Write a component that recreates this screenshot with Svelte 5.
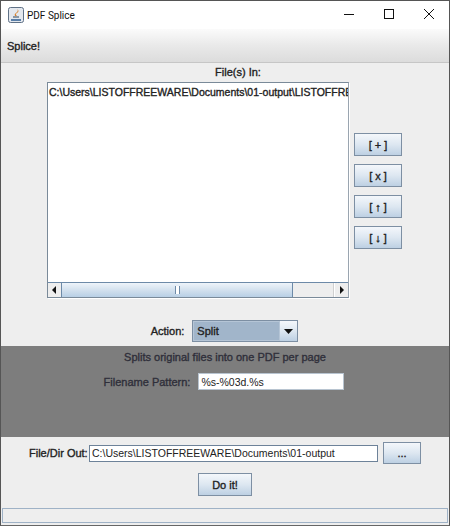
<script>
  let pattern = $state('%s-%03d.%s');
  let out = $state('C:\\Users\\LISTOFFREEWARE\\Documents\\01-output');
  const files = ['C:\\Users\\LISTOFFREEWARE\\Documents\\01-output\\LISTOFFREEWARE.pdf'];
  const listButtons = ['[ + ]', '[ x ]', '[ ↑ ]', '[ ↓ ]'];
</script>

<div class="window">
  <header class="titlebar">
    <svg class="app-icon" width="16" height="16" viewBox="0 0 16 16">
      <rect x="0.5" y="0.5" width="15" height="15" rx="2" fill="#e4e8ee" stroke="#5f7186" />
      <path d="M3 12h10v2H3z" fill="#5a7fa8" />
      <path d="M5 11h6v-2H5z" fill="#8a97a5" />
      <path d="M7 9c-1-2 1-3 2-4s1-2 0-3c2 1 2 3 0 4s-1 2 0 3z" fill="#d9822b" />
    </svg>
    <span class="title">PDF Splice</span>
    <div class="controls">
      <svg width="40" height="28" viewBox="0 0 40 28"><path d="M15 13.500h10" stroke="#111" fill="none" /></svg>
      <svg width="40" height="28" viewBox="0 0 40 28"><rect x="15.500" y="8.500" width="9" height="9" stroke="#111" fill="none" /></svg>
      <svg width="40" height="28" viewBox="0 0 40 28"><path d="M15 8l10 10M25 8L15 18" stroke="#111" fill="none" /></svg>
    </div>
  </header>

  <nav class="menubar"><span class="strong">Splice!</span></nav>

  <main class="content">
    <div class="files-label strong">File(s) In:</div>
    <div class="files-row">
      <div class="list-box">
        <div class="list-view">
          {#each files as file}
            <div class="list-item strong">{file}</div>
          {/each}
        </div>
        <div class="hscroll">
          <div class="arrow"><svg width="5" height="8" viewBox="0 0 5 8"><path d="M4 0v8L0 4z" fill="#111" /></svg></div>
          <div class="thumb"><span class="grip"></span></div>
          <div class="track"></div>
          <div class="arrow right"><svg width="5" height="8" viewBox="0 0 5 8"><path d="M1 0v8l4-4z" fill="#111" /></svg></div>
        </div>
      </div>
      <div class="list-buttons">
        {#each listButtons as label}
          <button class="btn small strong">{label}</button>
        {/each}
      </div>
    </div>

    <div class="action-row">
      <span class="strong">Action:</span>
      <div class="combo">
        <span class="combo-value strong">Split</span>
        <span class="combo-arrow"><svg width="9" height="5" viewBox="0 0 9 5"><path d="M0 0h9L4.500 5z" fill="#111" /></svg></span>
      </div>
    </div>

    <section class="options">
      <div class="options-desc strong">Splits original files into one PDF per page</div>
      <div class="pattern-row">
        <span class="strong">Filename Pattern:</span>
        <input class="pattern" bind:value={pattern} />
      </div>
    </section>

    <div class="out-row">
      <span class="out-label strong">File/Dir Out:</span>
      <input class="out" bind:value={out} />
      <button class="btn browse strong">...</button>
    </div>
    <div class="go-row">
      <button class="btn go strong">Do it!</button>
    </div>
    <div class="status"></div>
  </main>
</div>

<style>
  :global(body) {
    margin: 0;
    background: #eeeeee;
  }

  .window {
    width: 450px;
    height: 526px;
    box-sizing: border-box;
    border: 1px solid #555;
    border-bottom: 1px solid #666;
    display: flex;
    flex-direction: column;
    overflow: hidden;
    font-family: "Liberation Sans", Arial, sans-serif;
    font-size: 11px;
    color: #222;
    background: #eeeeee;
  }

  /* java's fake bold: regular outlines smeared a little */
  .strong {
    font-weight: normal;
    -webkit-text-stroke: 0.35px currentColor;
  }

  .titlebar {
    height: 28px;
    flex: none;
    display: flex;
    align-items: center;
    background: #fff;
    padding-left: 7px;
  }

  .app-icon {
    margin-right: 3px;
  }

  .title {
    font-family: Roboto, sans-serif;
    font-size: 10px;
    color: #111;
  }

  .controls {
    margin-left: auto;
    display: flex;
  }

  .menubar {
    height: 34px;
    flex: none;
    box-sizing: border-box;
    display: flex;
    align-items: center;
    padding-left: 6px;
    background: linear-gradient(#fbfbfb, #e9e9e9 50%, #dcdcdc);
    border-bottom: 1px solid #c6c6c6;
  }

  .content {
    flex: 1;
    display: flex;
    flex-direction: column;
  }

  .files-label {
    text-align: center;
    padding-left: 26px;
    height: 19px;
    line-height: 18px;
  }

  .files-row {
    display: flex;
    padding-left: 46px;
    height: 216px;
  }

  .list-box {
    width: 302px;
    height: 216px;
    box-sizing: border-box;
    border: 1px solid #7a8a99;
    border-right-color: #9aa5b0;
    background: #fff;
    display: flex;
    flex-direction: column;
    box-shadow: 1px 1px 0 #fff;
  }

  .list-view {
    flex: 1;
    overflow: hidden;
    padding: 3px 0 0 1px;
  }

  .list-item {
    font-size: 10.5px;
    white-space: nowrap;
  }

  .hscroll {
    height: 14px;
    display: flex;
    border-top: 1px solid #6d8aa8;
    background: #eeeeee;
  }

  .arrow {
    width: 13px;
    flex: none;
    display: flex;
    align-items: center;
    justify-content: center;
    background: #eeeeee;
  }

  .arrow.right {
    border-left: 1px solid #fff;
    box-shadow: -1px 0 0 #d0d0d0;
  }

  .thumb {
    width: 232px;
    flex: none;
    box-sizing: border-box;
    display: flex;
    align-items: center;
    justify-content: center;
    border-left: 1px solid #6d8aa8;
    border-right: 1px solid #6d8aa8;
    background: linear-gradient(#eef4fa, #d3e1ee 50%, #b8cfe5);
  }

  .grip {
    width: 3px;
    height: 8px;
    border-left: 1px solid #6d8aa8;
    border-right: 1px solid #6d8aa8;
    background: #fff;
  }

  .track {
    flex: 1;
  }

  .list-buttons {
    margin-left: 5px;
    padding-top: 51px;
    display: flex;
    flex-direction: column;
    gap: 8px;
  }

  .btn {
    box-sizing: border-box;
    padding: 0;
    border: 1px solid #7d8fa3;
    background: linear-gradient(#f4f7fb, #dde7f1 50%, #bdd0e3);
    font-family: inherit;
    font-size: 11px;
    color: #222;
  }

  .btn.small {
    width: 48px;
    height: 23px;
  }

  .action-row {
    display: flex;
    align-items: center;
    justify-content: center;
    height: 22px;
    margin-top: 22px;
    padding-right: 1px;
    gap: 8px;
  }

  .combo {
    width: 106px;
    height: 22px;
    box-sizing: border-box;
    display: flex;
    border: 1px solid #7d8fa3;
    background: #a1b5ca;
  }

  .combo-value {
    flex: 1;
    padding-left: 3px;
    line-height: 19px;
    border: 1px solid #b5c5d6;
  }

  .combo-arrow {
    width: 17px;
    display: flex;
    align-items: center;
    justify-content: center;
    background: linear-gradient(#f4f7fb, #dde7f1 50%, #bdd0e3);
  }

  .options {
    height: 91px;
    flex: none;
    margin-top: 4px;
    background: #7d7d7d;
    color: #2f2f3a;
    display: flex;
    flex-direction: column;
    align-items: center;
  }

  .options-desc {
    line-height: 13px;
    margin-top: 5px;
  }

  .pattern-row {
    display: flex;
    align-items: center;
    gap: 8px;
    margin-top: 9px;
    padding-right: 2px;
  }

  .pattern {
    width: 146px;
    height: 17px;
    box-sizing: border-box;
    border: 1px solid #b8c4d0;
    padding: 0 2px;
    font: 10.5px "Liberation Sans", Arial, sans-serif;
    color: #222;
    background: #fff;
    outline: none;
  }

  .out-row {
    display: flex;
    align-items: center;
    padding-left: 28px;
    margin-top: 5px;
    height: 22px;
  }

  .out-label {
    width: 60px;
    white-space: nowrap;
  }

  .out {
    width: 289px;
    height: 17px;
    box-sizing: border-box;
    border: 1px solid #6d8299;
    padding: 0 2px;
    font: 10.5px "Liberation Sans", Arial, sans-serif;
    color: #222;
    background: #fff;
    outline: none;
  }

  .browse {
    width: 38px;
    height: 22px;
    margin-left: 5px;
  }

  .go-row {
    display: flex;
    justify-content: center;
    margin-top: 9px;
  }

  .go {
    width: 54px;
    height: 23px;
  }

  .status {
    margin-top: 12px;
    margin-left: 1px;
    margin-right: 1px;
    height: 13px;
    border: 1px solid #9fb2c6;
    background: #eeeeee;
  }
</style>
